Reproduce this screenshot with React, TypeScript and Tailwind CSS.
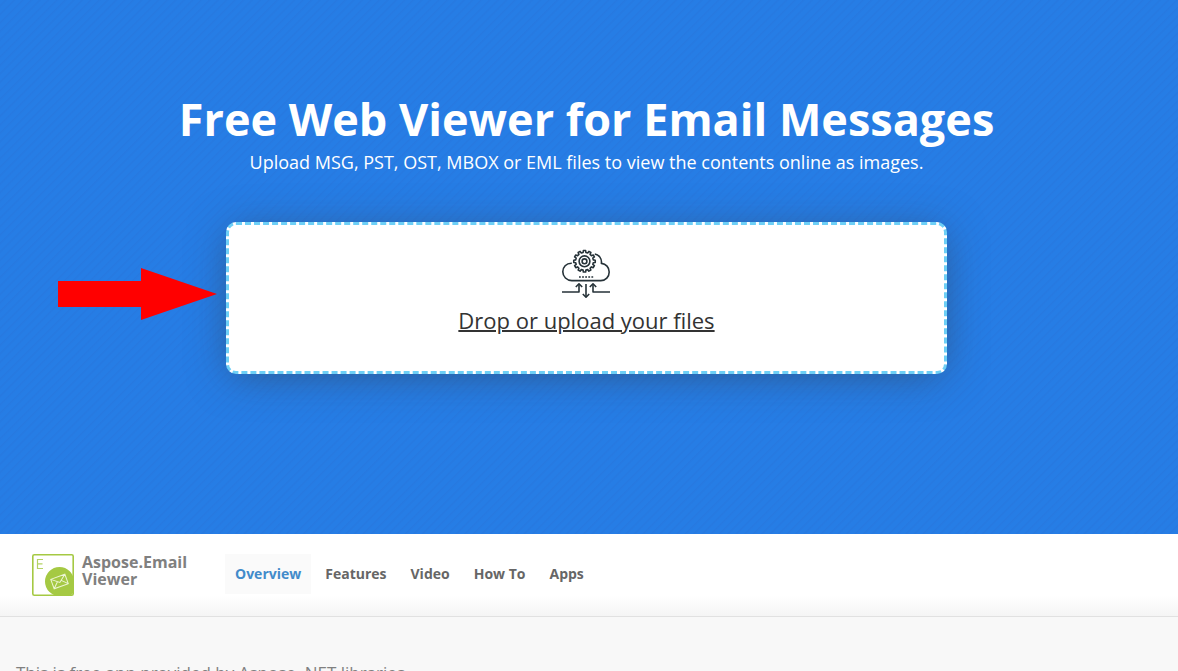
import React from "react";

const NAV_ITEMS = ["Overview", "Features", "Video", "How To", "Apps"];

function gearPath(cx: number, cy: number, inner: number, outer: number, teeth: number): string {
  const step = (Math.PI * 2) / teeth;
  const points: string[] = [];
  for (let i = 0; i < teeth; i++) {
    const a = i * step - Math.PI / 2;
    const corners: [number, number][] = [
      [inner, -0.3],
      [outer, -0.2],
      [outer, 0.2],
      [inner, 0.3],
    ];
    for (const [r, offset] of corners) {
      const t = a + offset * step;
      points.push(`${(cx + r * Math.cos(t)).toFixed(2)} ${(cy + r * Math.sin(t)).toFixed(2)}`);
    }
  }
  return `M${points.join("L")}Z`;
}

function CloudUploadIcon() {
  return (
    <svg
      width="50"
      height="50"
      viewBox="0 0 50 50"
      fill="none"
      stroke="#263238"
      strokeWidth="1.6"
      strokeLinejoin="round"
      aria-hidden="true"
    >
      <path d="M10.8 14.2C5 14 1.8 18.3 1.8 22.800c0 4.900 4 8.800 9 8.800h29c4.800 0 8.400-3.800 8.400-8.600 0-4.600-3.200-8.200-7.800-8.600.600-5-2.400-8.600-6.600-9.400" />
      <path d={gearPath(23.5, 12.3, 8.9, 10.8, 12)} />
      <circle cx="23.5" cy="12.3" r="5.4" />
      <circle cx="23.5" cy="12.3" r="2.4" />
      <path d="M18 28h14.500" strokeDasharray="1.8 1.3" />
      <path d="M1 43h17v-8M49 43H32v-8M25 35v13" />
      <path d="M14.800 38l3.200-3.200 3.200 3.200M28.800 38l3.200-3.200 3.200 3.200M21.800 45l3.200 3.200 3.200-3.200" />
    </svg>
  );
}

function EmailLogo() {
  return (
    <svg width="42" height="42" viewBox="0 0 42 42" fill="none" aria-hidden="true">
      <rect x="0.8" y="0.8" width="40.4" height="40.4" rx="1.5" fill="#fff" stroke="#a5c943" strokeWidth="1.6" />
      <path d="M11 5.500H5.500v9H11M5.500 9.800h5" stroke="#b4d264" strokeWidth="1.2" />
      <path d="M42 27.500V36a6 6 0 0 1-6 6H27.500a14.500 14.500 0 1 1 14.500-14.500Z" fill="#a5c943" />
      <g transform="rotate(-20 27.5 27.5)" stroke="#edf5d5" strokeWidth="1">
        <path d="M20 22.500h15v10H20ZM20 22.500l7.500 6 7.500-6M20 32.500l5.500-5.500M35 32.500l-5.500-5.500" />
      </g>
    </svg>
  );
}

function PointerArrow() {
  return (
    <svg
      className="pointer-events-none absolute top-[46px] right-full mr-[9px]"
      width="159"
      height="52"
      viewBox="0 0 159 52"
      aria-hidden="true"
    >
      <path d="M0 13h83V0l76 26-76 26V39H0Z" fill="#f00" />
    </svg>
  );
}

export default function App() {
  return (
    <div className="h-screen overflow-hidden bg-[#f8f8f8] font-['Open_Sans',sans-serif]">
      <header className="bg-[#267de5] bg-[repeating-linear-gradient(135deg,#267de5_0px,#267de5_3px,#2779e0_4px,#267de5_6px)] pt-[95px] pr-[5px] pb-40 text-center text-white">
        <h1 className="text-[45px] leading-12 font-bold">Free Web Viewer for Email Messages</h1>
        <p className="mt-[5px] text-[18px] leading-7">
          Upload MSG, PST, OST, MBOX or EML files to view the contents online as images.
        </p>
        <div className="relative mx-auto mt-[46px] w-[61.5%] text-[#333]">
          <label
            htmlFor="files"
            className="flex cursor-pointer flex-col items-center rounded-[10px] border-3 border-dashed border-[#6dcff6] bg-white pt-6 pb-[34px] shadow-[0_5px_40px_-5px_rgba(51,51,51,0.5)]"
          >
            <CloudUploadIcon />
            <span className="mt-1 text-[22px] leading-[34px] underline decoration-2">Drop or upload your files</span>
          </label>
          <input id="files" type="file" multiple className="sr-only" />
          <PointerArrow />
        </div>
      </header>

      <div className="flex h-[83px] items-start border-b border-[#e1e1e1] bg-linear-to-b from-white from-75% to-[#f5f5f5] pt-5 pl-8">
        <a href="#home" className="flex w-[193px] gap-2 text-[16px] leading-[17px] font-bold text-[#808080]">
          <EmailLogo />
          <span>
            Aspose.Email
            <br />
            Viewer
          </span>
        </a>
        <nav className="flex gap-1 text-[14px] leading-10 font-bold">
          {NAV_ITEMS.map((item, index) => (
            <a
              key={item}
              href={`#${item.toLowerCase().replace(" ", "-")}`}
              className={index === 0 ? "bg-[#fafafa] px-[10px] text-[#428bca]" : "px-[10px] text-[#666]"}
            >
              {item}
            </a>
          ))}
        </nav>
      </div>

      <main className="px-4 pt-11">
        <p className="text-[17px] leading-6 text-[#808080]">This is free app provided by Aspose .NET libraries.</p>
      </main>
    </div>
  );
}
